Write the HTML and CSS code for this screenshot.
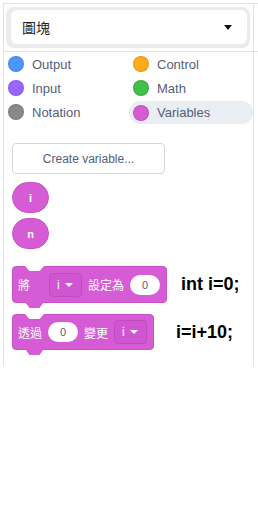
FILE: index.html
```html
<!DOCTYPE html>
<html lang="zh-Hant">
<head>
    <meta charset="UTF-8">
    <meta name="viewport" content="width=device-width, initial-scale=1.0">
    <title>圖塊</title>
    <link rel="stylesheet" href="styles.css">
</head>
<body>
    <div class="panel">
        <!-- Category selector -->
        <div class="topbar">
            <div class="topbar-inner">
                <div class="select-frame">
                    <div class="select">
                        <span>圖塊</span>
                        <span class="caret"></span>
                    </div>
                </div>
            </div>
        </div>

        <div class="flyout">
            <!-- Block categories -->
            <div class="cats">
                <div class="cat"><span class="dot dot-output"></span>Output</div>
                <div class="cat"><span class="dot dot-control"></span>Control</div>
                <div class="cat"><span class="dot dot-input"></span>Input</div>
                <div class="cat"><span class="dot dot-math"></span>Math</div>
                <div class="cat"><span class="dot dot-notation"></span>Notation</div>
                <div class="cat active"><span class="dot dot-variables"></span>Variables</div>
            </div>

            <!-- Variable blocks -->
            <div class="vars">
                <button class="create-btn">Create variable...</button>
                <div class="var-pill">i</div>
                <div class="var-pill second">n</div>

                <div class="block-row first">
                    <div class="block block-set">
                        <span class="label label-gap">將</span>
                        <span class="field">i<span class="field-caret"></span></span>
                        <span class="label">設定為</span>
                        <span class="oval">0</span>
                    </div>
                    <span class="code code-set">int i=0;</span>
                </div>

                <div class="block-row">
                    <div class="block block-change">
                        <span class="label">透過</span>
                        <span class="oval">0</span>
                        <span class="label">變更</span>
                        <span class="field">i<span class="field-caret"></span></span>
                    </div>
                    <span class="code code-change">i=i+10;</span>
                </div>
            </div>
        </div>
    </div>
</body>
</html>
```

FILE: styles.css
```css
/* Page basics */
body {
    margin: 0;
    background-color: #fff;
    font-family: "Liberation Sans", Arial, "Noto Sans CJK TC", sans-serif;
}

/* Outer panel with light borders */
.panel {
    margin: 3px 0 0 3px;
    width: 255px;
    height: 363px;
    box-sizing: border-box;
    border-top: 1px solid #e3e3e3;
    border-left: 1px solid #e3e3e3;
}

/* Top bar with the dropdown */
.topbar {
    border-bottom: 1px solid #e3e3e3;
}

.topbar-inner {
    width: 250px;
    height: 47px;
    box-sizing: border-box;
    padding: 3px 3px 3px 2px;
    border-right: 1px solid #e3e3e3;
}

.select-frame {
    height: 41px;
    box-sizing: border-box;
    padding: 3px 3px 4px 5px;
    background-color: #ebebef;
    border-radius: 8px;
}

.select {
    height: 34px;
    box-sizing: border-box;
    display: flex;
    align-items: center;
    justify-content: space-between;
    padding: 0 15px 0 11px;
    background-color: #fff;
    border-radius: 6px;
    font-family: "Noto Sans CJK TC", sans-serif;
    font-size: 14px;
    color: #222;
}

.caret {
    width: 0;
    height: 0;
    border-left: 4px solid transparent;
    border-right: 4px solid transparent;
    border-top: 5px solid #111;
}

/* Flyout column */
.flyout {
    width: 250px;
    height: 315px;
    box-sizing: border-box;
    border-right: 1px solid #e3e3e3;
}

.cats {
    display: grid;
    grid-template-columns: 125px 124px;
    grid-auto-rows: 24px;
}

.cat {
    display: flex;
    align-items: center;
    gap: 8px;
    padding-left: 4px;
    font-size: 13px;
    color: #575e75;
}

.cat.active {
    background-color: #e9eef2;
    border-radius: 12px;
    height: 23px;
    align-self: end;
}

.dot {
    width: 16px;
    height: 16px;
    box-sizing: border-box;
    border-radius: 50%;
    border: 1px solid rgba(0, 0, 0, 0.12);
}

.dot-output { background-color: #4c97ff; }
.dot-control { background-color: #ffab19; }
.dot-input { background-color: #9966ff; }
.dot-math { background-color: #40bf4a; }
.dot-notation { background-color: #8a8a8a; }
.dot-variables { background-color: #d65cd6; }

/* Variable area */
.vars {
    padding-left: 8px;
    padding-top: 19px;
}

.create-btn {
    display: block;
    width: 153px;
    height: 31px;
    padding: 0;
    background-color: #fff;
    border: 1px solid #d6d6d6;
    border-radius: 4px;
    font-family: "Liberation Sans", Arial, sans-serif;
    font-size: 12px;
    color: #575e75;
}

.var-pill {
    margin-top: 8px;
    width: 37px;
    height: 31px;
    box-sizing: border-box;
    display: flex;
    align-items: center;
    justify-content: center;
    background-color: #d65cd6;
    border: 1px solid #c953c9;
    border-radius: 16px;
    color: #fff;
    font-size: 11px;
    font-weight: bold;
}

.var-pill.second {
    margin-top: 5px;
}

/* Stack blocks */
.block-row {
    display: flex;
    align-items: center;
    margin-top: 11px;
}

.block-row.first {
    margin-top: 17px;
}

.block {
    position: relative;
    display: flex;
    align-items: center;
    gap: 6px;
    box-sizing: border-box;
    padding: 0 6px 0 5px;
    background-color: #d65cd6;
    border: 1px solid #c953c9;
    border-radius: 4px;
    font-family: "Noto Sans CJK TC", sans-serif;
    font-size: 12px;
    color: #fff;
}

.block-set {
    height: 37px;
}

.block-change {
    height: 36px;
}

/* notch on top */
.block::before {
    content: "";
    position: absolute;
    top: -1px;
    left: 12px;
    width: 19px;
    height: 5px;
    background-color: #fff;
    clip-path: polygon(0 0, 100% 0, 76% 100%, 24% 100%);
}

/* tab at the bottom */
.block::after {
    content: "";
    position: absolute;
    bottom: -6px;
    left: 12px;
    width: 19px;
    height: 6px;
    background-color: #d65cd6;
    clip-path: polygon(0 0, 100% 0, 76% 100%, 24% 100%);
}

.label-gap {
    margin-right: 13px;
}

.field {
    display: flex;
    align-items: center;
    gap: 5px;
    width: 33px;
    height: 24px;
    box-sizing: border-box;
    padding-left: 7px;
    border: 1px solid #c04bc0;
    border-radius: 4px;
    background-color: #d055d0;
    font-family: "Liberation Sans", Arial, sans-serif;
    font-size: 12px;
}

.field-caret {
    width: 0;
    height: 0;
    border-left: 4px solid transparent;
    border-right: 4px solid transparent;
    border-top: 4px solid #fff;
}

.oval {
    display: flex;
    align-items: center;
    justify-content: center;
    width: 30px;
    height: 20px;
    background-color: #fff;
    border-radius: 10px;
    font-family: "Liberation Sans", Arial, sans-serif;
    font-size: 11px;
    color: #575e75;
}

/* Code comments beside the blocks */
.code {
    font-family: "Liberation Sans", Arial, sans-serif;
    font-size: 18px;
    font-weight: bold;
    color: #000;
}

.code-set {
    margin-left: 14px;
}

.code-change {
    margin-left: 22px;
}
```
